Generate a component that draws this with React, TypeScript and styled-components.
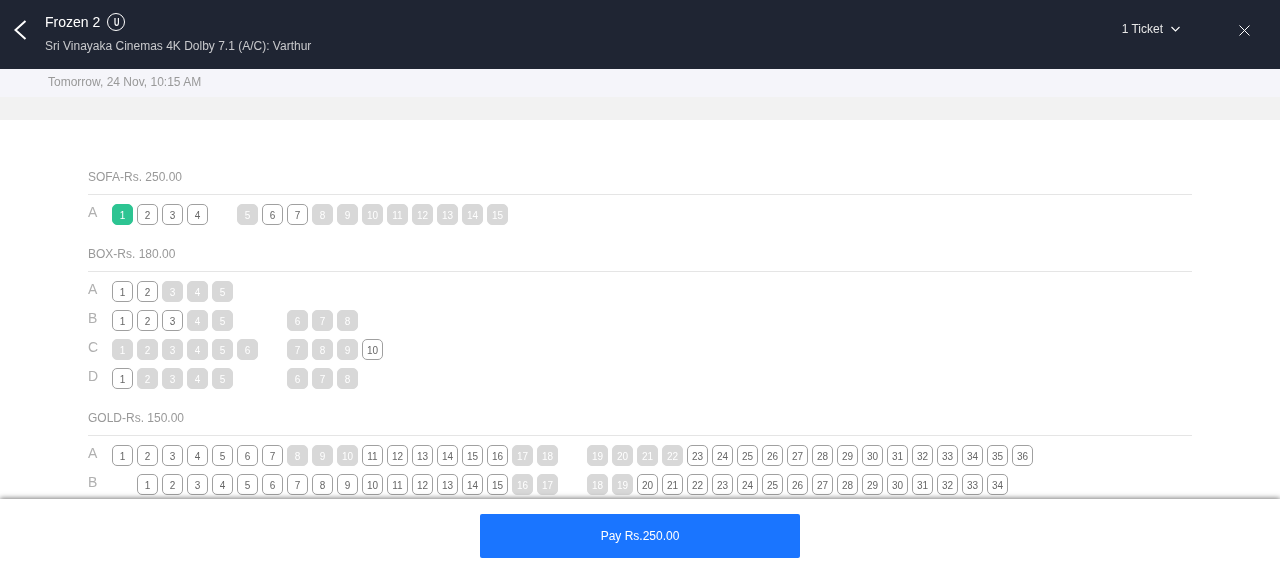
import React from "react";
import styled, { createGlobalStyle } from "styled-components";

const GlobalStyle = createGlobalStyle`
  html, body {
    margin: 0;
    padding: 0;
    height: 100%;
    background: #ffffff;
    font-family: "Liberation Sans", Arial, sans-serif;
  }
`;

type SeatState = "open" | "sold" | "picked";

interface Seat {
  label: number;
  state: SeatState;
}

type Slot = Seat | null;

interface RowData {
  name: string;
  slots: Slot[];
}

interface SectionData {
  title: string;
  rows: RowData[];
}

// [from, to, state] runs, or a number for empty slots in the row
const build = (parts: (number | [number, number, SeatState])[]): Slot[] => {
  const out: Slot[] = [];
  parts.forEach((p) => {
    if (typeof p === "number") {
      for (let i = 0; i < p; i++) out.push(null);
    } else {
      for (let n = p[0]; n <= p[1]; n++) out.push({ label: n, state: p[2] });
    }
  });
  return out;
};

const sections: SectionData[] = [
  {
    title: "SOFA-Rs. 250.00",
    rows: [
      {
        name: "A",
        slots: build([
          [1, 1, "picked"],
          [2, 4, "open"],
          1,
          [5, 5, "sold"],
          [6, 7, "open"],
          [8, 15, "sold"],
        ]),
      },
    ],
  },
  {
    title: "BOX-Rs. 180.00",
    rows: [
      { name: "A", slots: build([[1, 2, "open"], [3, 5, "sold"]]) },
      { name: "B", slots: build([[1, 3, "open"], [4, 5, "sold"], 2, [6, 8, "sold"]]) },
      { name: "C", slots: build([[1, 6, "sold"], 1, [7, 9, "sold"], [10, 10, "open"]]) },
      { name: "D", slots: build([[1, 1, "open"], [2, 5, "sold"], 2, [6, 8, "sold"]]) },
    ],
  },
  {
    title: "GOLD-Rs. 150.00",
    rows: [
      {
        name: "A",
        slots: build([
          [1, 7, "open"],
          [8, 10, "sold"],
          [11, 16, "open"],
          [17, 18, "sold"],
          1,
          [19, 22, "sold"],
          [23, 36, "open"],
        ]),
      },
      {
        name: "B",
        slots: build([
          1,
          [1, 15, "open"],
          [16, 17, "sold"],
          1,
          [18, 19, "sold"],
          [20, 34, "open"],
        ]),
      },
    ],
  },
];

export default function App() {
  return (
    <>
      <GlobalStyle />
      <Page>
        <Header>
          <BackButton>
            <svg width="14" height="20" viewBox="0 0 14 20" fill="none">
              <path d="M12.5 1 L2.5 10 L12.5 19" stroke="#fff" strokeWidth="2" />
            </svg>
          </BackButton>
          <Titles>
            <TitleLine>
              <MovieName>Frozen 2</MovieName>
              <Rating>
                <RatingLetter>U</RatingLetter>
              </Rating>
            </TitleLine>
            <Venue>Sri Vinayaka Cinemas 4K Dolby 7.1 (A/C): Varthur</Venue>
          </Titles>
          <TicketPicker>
            1 Ticket
            <svg width="9" height="7" viewBox="0 0 9 7" fill="none">
              <path d="M0.5 1 L4.5 5 L8.5 1" stroke="#fff" strokeWidth="1.1" />
            </svg>
          </TicketPicker>
          <CloseButton>
            <svg width="11" height="11" viewBox="0 0 11 11" fill="none">
              <path d="M0.5 0.5 L10.5 10.5 M10.5 0.5 L0.5 10.5" stroke="#fff" strokeWidth="1" />
            </svg>
          </CloseButton>
        </Header>
        <ShowBar>Tomorrow, 24 Nov, 10:15 AM</ShowBar>
        <GreyBand />
        <SeatArea>
          {sections.map((section) => (
            <Section key={section.title}>
              <SectionTitle>{section.title}</SectionTitle>
              {section.rows.map((row) => (
                <Row key={row.name}>
                  <RowName>{row.name}</RowName>
                  {row.slots.map((slot, i) =>
                    slot ? (
                      <SeatBox key={i} $state={slot.state}>
                        {slot.label}
                      </SeatBox>
                    ) : (
                      <EmptySlot key={i} />
                    )
                  )}
                </Row>
              ))}
            </Section>
          ))}
        </SeatArea>
        <Footer>
          <PayButton>Pay Rs.250.00</PayButton>
        </Footer>
      </Page>
    </>
  );
}

const Page = styled.div`
  height: 100vh;
  display: flex;
  flex-direction: column;
  overflow: hidden;
  will-change: transform;
`;

const Header = styled.div`
  height: 69px;
  flex-shrink: 0;
  background: #1f2533;
  display: flex;
  align-items: flex-start;
  color: #ffffff;
`;

const BackButton = styled.div`
  width: 45px;
  padding: 20px 0 0 13px;
  box-sizing: border-box;
  line-height: 0;
`;

const Titles = styled.div`
  flex: 1;
  padding-top: 13px;
`;

const TitleLine = styled.div`
  display: flex;
  align-items: center;
  gap: 7px;
  height: 18px;
`;

const MovieName = styled.span`
  font-size: 14px;
  color: #ffffff;
`;

const Rating = styled.span`
  width: 16px;
  height: 16px;
  border: 1px solid #ffffff;
  border-radius: 50%;
  display: flex;
  align-items: center;
  justify-content: center;
`;

const RatingLetter = styled.span`
  font-size: 10px;
  font-weight: 700;
  transform: scaleX(0.75);
`;

const Venue = styled.div`
  margin-top: 8px;
  font-size: 12px;
  line-height: 14px;
  color: #c8c9cc;
`;

const TicketPicker = styled.div`
  display: flex;
  align-items: center;
  gap: 8px;
  margin-top: 22px;
  height: 14px;
  font-size: 12px;
  color: #e6e6e6;
`;

const CloseButton = styled.div`
  margin: 25px 30px 0 59px;
  line-height: 0;
`;

const ShowBar = styled.div`
  height: 28px;
  flex-shrink: 0;
  box-sizing: border-box;
  padding: 6px 0 0 48px;
  background: #f5f5fa;
  font-size: 12px;
  line-height: 14px;
  color: #999999;
`;

const GreyBand = styled.div`
  height: 23px;
  flex-shrink: 0;
  background: #f2f2f2;
`;

const SeatArea = styled.div`
  flex: 1;
  min-height: 0;
  overflow: hidden;
  padding: 40px 88px 0;
`;

const Section = styled.div`
  margin-bottom: 12px;
`;

const SectionTitle = styled.div`
  height: 35px;
  box-sizing: border-box;
  padding-top: 10px;
  border-bottom: 1px solid #e5e5e5;
  font-size: 12px;
  line-height: 14px;
  color: #999999;
  margin-bottom: 9px;
`;

const Row = styled.div`
  display: flex;
  align-items: flex-start;
  height: 21px;
  margin-bottom: 8px;
  gap: 4px;
`;

const RowName = styled.div`
  width: 20px;
  font-size: 14px;
  line-height: 16px;
  color: #b0b0b0;
`;

const EmptySlot = styled.div`
  width: 21px;
  height: 21px;
  flex-shrink: 0;
`;

const seatColors = {
  open: "background: #ffffff; border: 1px solid #a0a0a0; color: #666666;",
  sold: "background: #d8d8d8; border: 1px solid #d8d8d8; color: #ffffff;",
  picked: "background: #2dc492; border: 1px solid #2dc492; color: #ffffff;",
};

const SeatBox = styled.div<{ $state: SeatState }>`
  width: 21px;
  height: 21px;
  box-sizing: border-box;
  flex-shrink: 0;
  border-radius: 5px;
  display: flex;
  align-items: center;
  justify-content: center;
  font-size: 10px;
  padding-top: 1px;
  ${(props) => seatColors[props.$state]}
`;

const Footer = styled.div`
  height: 74px;
  flex-shrink: 0;
  position: relative;
  background: #ffffff;
  box-shadow: 0 -1px 5px rgba(0, 0, 0, 0.5);
  display: flex;
  justify-content: center;
  padding-top: 15px;
  box-sizing: border-box;
`;

const PayButton = styled.div`
  width: 320px;
  height: 44px;
  background: #1a75ff;
  border-radius: 2px;
  color: #ffffff;
  font-size: 12px;
  display: flex;
  align-items: center;
  justify-content: center;
`;
